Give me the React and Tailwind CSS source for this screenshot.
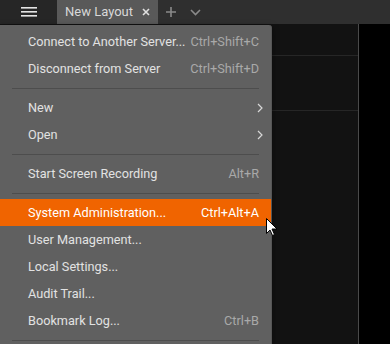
import React from "react";

const font = { fontFamily: "Roboto, 'Noto Sans', sans-serif" };

function Item({ label, shortcut, sub, active }) {
  return (
    <div
      className={`flex h-[27px] items-center whitespace-nowrap pl-[28px] pr-[12px] text-[12.7px] ${
        active ? "bg-[#f06400] text-white" : "text-[#e2e2e2]"
      }`}
    >
      <span className="flex-1">{label}</span>
      {shortcut && (
        <span className={active ? "text-white" : "text-[#a9a9a9]"}>{shortcut}</span>
      )}
      {sub && (
        <svg width="6" height="10" viewBox="0 0 6 10" className="mr-[-4px]">
          <path d="M1 1 L5 5 L1 9" stroke="#d8d8d8" strokeWidth="1.2" fill="none" />
        </svg>
      )}
    </div>
  );
}

function Sep() {
  return (
    <div className="flex h-[12px] items-center px-[12px]">
      <div className="h-px w-full bg-[#4d4d4d]" />
    </div>
  );
}

export default function App() {
  return (
    <div className="relative h-[344px] w-[390px] overflow-hidden bg-[#121212]" style={font}>
      {/* top bar */}
      <div className="flex h-[24px] bg-[#2f2f2f]">
        <div className="flex w-[57px] items-center justify-center bg-[#262626]">
          <svg width="16" height="10" viewBox="0 0 16 10">
            <rect x="0" y="0" width="16" height="1.6" fill="#e4e4e4" />
            <rect x="0" y="4" width="16" height="1.6" fill="#e4e4e4" />
            <rect x="0" y="8" width="16" height="1.6" fill="#e4e4e4" />
          </svg>
        </div>
        <div className="flex w-[101px] items-center bg-[#595959] pl-[8px] text-[13px] text-[#d8d8d8]">
          <span className="flex-1">New Layout</span>
          <svg width="8" height="8" viewBox="0 0 8 8" className="mr-[8px]">
            <path d="M1 1 L7 7 M7 1 L1 7" stroke="#e0e0e0" strokeWidth="1.6" />
          </svg>
        </div>
        <div className="flex items-center gap-[14px] pl-[8px]">
          <svg width="10" height="10" viewBox="0 0 10 10">
            <path d="M5 0 V10 M0 5 H10" stroke="#8a8a8a" strokeWidth="1.6" />
          </svg>
          <svg width="11" height="7" viewBox="0 0 11 7">
            <path d="M1 1 L5.5 5.5 L10 1" stroke="#8a8a8a" strokeWidth="1.6" fill="none" />
          </svg>
        </div>
      </div>

      {/* content */}
      <div className="flex h-[320px]">
        <div className="flex w-[359px] flex-col border-r border-[#4a4a4a] bg-[#121212]">
          <div className="h-[32px] border-b border-[#262626]" />
          <div className="h-[55px] border-b border-[#262626]" />
        </div>
        <div className="flex-1 bg-black" />
      </div>

      {/* menu */}
      <div className="absolute left-0 top-[25px] w-[272px] rounded-tr-[3px] border-r border-[#555] bg-[#606060] pt-[3px] shadow-[0_2px_6px_rgba(0,0,0,0.5)]">
        <Item label="Connect to Another Server..." shortcut="Ctrl+Shift+C" />
        <Item label="Disconnect from Server" shortcut="Ctrl+Shift+D" />
        <Sep />
        <Item label="New" sub />
        <Item label="Open" sub />
        <Sep />
        <Item label="Start Screen Recording" shortcut="Alt+R" />
        <Sep />
        <Item label="System Administration..." shortcut="Ctrl+Alt+A" active />
        <Item label="User Management..." />
        <Item label="Local Settings..." />
        <Item label="Audit Trail..." />
        <Item label="Bookmark Log..." shortcut="Ctrl+B" />
        <Sep />
        <div className="h-[20px]" />
      </div>

      {/* cursor */}
      <svg
        className="absolute left-[266px] top-[218px]"
        width="12"
        height="19"
        viewBox="0 0 12 19"
      >
        <path
          d="M0.5 0.5 L0.5 15.5 L4 12 L6.5 17.5 L8.5 16.5 L6 11 L11 11 Z"
          fill="#fff"
          stroke="#000"
          strokeWidth="1"
        />
      </svg>
    </div>
  );
}
